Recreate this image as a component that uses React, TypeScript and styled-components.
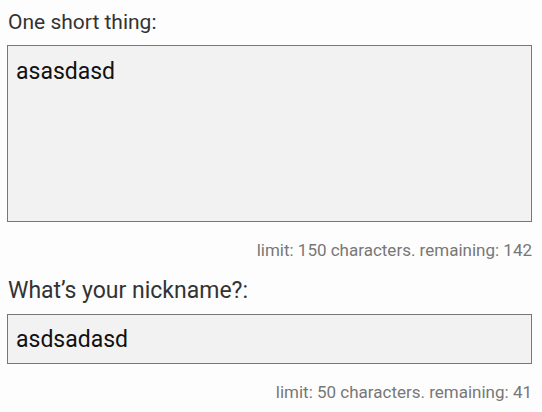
import { useEffect, useRef } from "react";
import styled, { createGlobalStyle } from "styled-components";

const GlobalStyle = createGlobalStyle`
  body {
    margin: 0;
    background: #fdfdfd;
    font-family: Roboto, "Liberation Sans", sans-serif;
  }
`;

const Page = styled.div`
  width: 525px;
  padding: 10px 0 0 7px;
`;

const Field = styled.div`
  display: flex;
  flex-direction: column;
`;

const Label = styled.label<{ $size: number }>`
  font-size: ${(p) => p.$size}px;
  color: #333;
  line-height: 24px;
  margin-bottom: 11px;
  padding-left: 1px;
`;

const Area = styled.textarea`
  box-sizing: border-box;
  width: 525px;
  height: 177px;
  resize: none;
  border: 1px solid #777;
  background: #f2f2f2;
  font-family: Roboto, "Liberation Sans", sans-serif;
  font-size: 23px;
  line-height: 28px;
  color: #111;
  caret-color: #111;
  padding: 12px 8px;
  outline: none;
  margin: 0;
`;

const Input = styled.input`
  box-sizing: border-box;
  width: 525px;
  height: 50px;
  border: 1px solid #777;
  background: #f2f2f2;
  font-family: Roboto, "Liberation Sans", sans-serif;
  font-size: 23px;
  color: #111;
  padding: 0 8px;
  outline: none;
  margin: 0;
`;

const Counter = styled.div`
  text-align: right;
  font-size: 17px;
  color: #777;
  margin-top: 19px;
  line-height: 18px;
`;

const App = () => {
  const thing = "asasdasd";
  const nick = "asdsadasd";
  const areaRef = useRef<HTMLTextAreaElement>(null);

  useEffect(() => {
    const el = areaRef.current;
    if (el) {
      el.focus();
      el.setSelectionRange(thing.length, thing.length);
    }
  }, []);

  return (
    <>
      <GlobalStyle />
      <Page>
        <Field>
          <Label $size={21}>One short thing:</Label>
          <Area ref={areaRef} defaultValue={thing} />
          <Counter>
            limit: 150 characters. remaining: {150 - thing.length}
          </Counter>
        </Field>
        <Field style={{ marginTop: 20 }}>
          <Label $size={23}>What’s your nickname?:</Label>
          <Input defaultValue={nick} />
          <Counter>limit: 50 characters. remaining: {50 - nick.length}</Counter>
        </Field>
      </Page>
    </>
  );
};

export default App;
